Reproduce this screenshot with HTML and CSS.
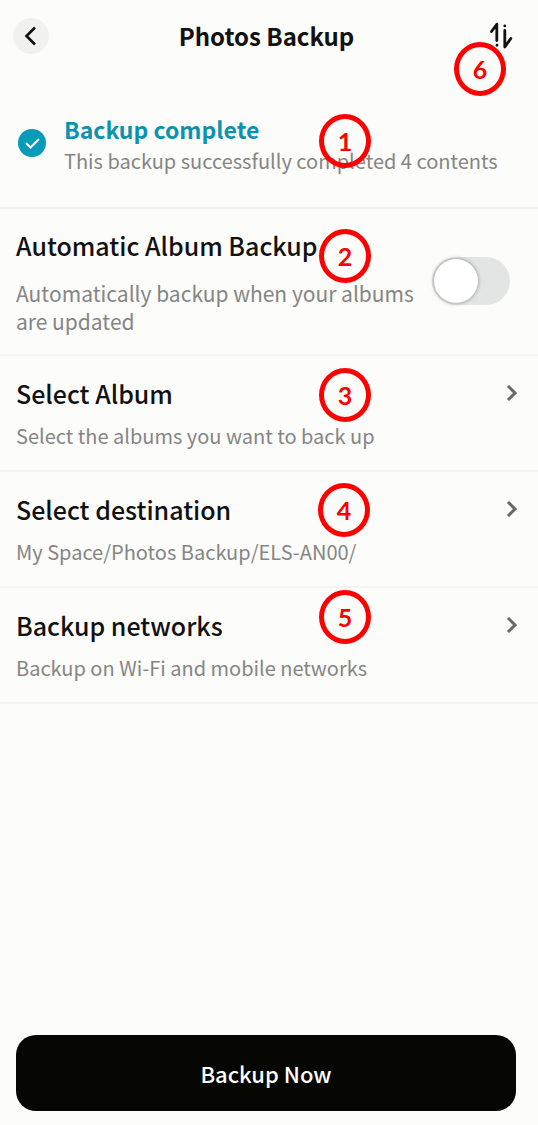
FILE: index.html
```html
<!DOCTYPE html>
<html lang="en">
<head>
<meta charset="utf-8">
<meta name="viewport" content="width=device-width, initial-scale=1">
<title>Photos Backup</title>
<link rel="stylesheet" href="styles.css">
</head>
<body>
<div class="screen">
  <header class="topbar">
    <button class="back" type="button" aria-label="Back">
      <svg width="36" height="36" viewBox="0 0 36 36" fill="none" stroke="#111" stroke-width="2.6"><path d="M22 9.500 13.500 18 22 26.500"/></svg>
    </button>
    <h1 class="title">Photos Backup</h1>
    <button class="transfer" type="button" aria-label="Transfer list">
      <svg width="24" height="28" viewBox="0 0 24 28" fill="none" stroke="#111" stroke-width="2.8" stroke-linecap="round" stroke-linejoin="round"><path d="M1.500 9.500 6.800 2.200V18.500M7 23.200V23.300M14.800 3.800V3.900M14.800 8.500V25L20.800 16.500"/></svg>
    </button>
    <span class="badge badge-transfer">6</span>
  </header>

  <section class="status">
    <svg class="status-icon" width="28" height="28" viewBox="0 0 28 28" fill="none"><circle cx="14" cy="14" r="14" fill="#069bb8"/><path d="M8 14 12.500 18.500 21 10" stroke="#fff" stroke-width="2"/></svg>
    <div class="status-text">
      <h2 class="status-title">Backup complete</h2>
      <p class="note">This backup successfully completed 4 contents</p>
    </div>
    <span class="badge badge-status">1</span>
  </section>

  <main class="settings">
    <div class="row row-auto">
      <label class="row-text" for="auto">
        <span class="row-title">Automatic Album Backup</span>
        <span class="note note-wide">Automatically backup when your albums are updated</span>
      </label>
      <input class="switch" id="auto" type="checkbox" role="switch">
      <span class="badge badge-auto">2</span>
    </div>
    <a class="row" href="#album">
      <span class="row-text">
        <span class="row-title">Select Album</span>
        <span class="note">Select the albums you want to back up</span>
      </span>
      <svg class="chevron" width="12" height="18" viewBox="0 0 12 18" fill="none" stroke="#686868" stroke-width="3"><path d="M2 2 9 9 2 16"/></svg>
      <span class="badge badge-album">3</span>
    </a>
    <a class="row" href="#destination">
      <span class="row-text">
        <span class="row-title">Select destination</span>
        <span class="note">My Space/Photos Backup/ELS-AN00/</span>
      </span>
      <svg class="chevron" width="12" height="18" viewBox="0 0 12 18" fill="none" stroke="#686868" stroke-width="3"><path d="M2 2 9 9 2 16"/></svg>
      <span class="badge badge-destination">4</span>
    </a>
    <a class="row" href="#networks">
      <span class="row-text">
        <span class="row-title">Backup networks</span>
        <span class="note">Backup on Wi-Fi and mobile networks</span>
      </span>
      <svg class="chevron" width="12" height="18" viewBox="0 0 12 18" fill="none" stroke="#686868" stroke-width="3"><path d="M2 2 9 9 2 16"/></svg>
      <span class="badge badge-networks">5</span>
    </a>
  </main>

  <footer class="actions">
    <button class="primary" type="button">Backup Now</button>
  </footer>
</div>
</body>
</html>
```
FILE: styles.css
```css
* { box-sizing: border-box; }

body {
  margin: 0;
  background: #fcfcfa;
  color: #111;
  font-family: "Noto Sans CJK SC", "Noto Sans", sans-serif;
}

h1, h2, p { margin: 0; }

button {
  border: 0;
  padding: 0;
  font-family: inherit;
  cursor: pointer;
}

.screen {
  min-height: 100vh;
  display: flex;
  flex-direction: column;
}

.topbar {
  position: relative;
  display: grid;
  grid-template-columns: 36px 1fr 36px;
  align-items: center;
  height: 72px;
  padding: 0 18px 0 13px;
}

.back {
  width: 36px;
  height: 36px;
  border-radius: 50%;
  background: #f1f1f0;
}

.back svg, .transfer svg { display: block; }

.title {
  font-size: 24px;
  line-height: 36px;
  font-weight: 700;
  text-align: center;
}

.transfer {
  justify-self: center;
  background: none;
}

.status {
  position: relative;
  display: flex;
  align-items: center;
  gap: 18px;
  padding: 39px 18px 32px;
  border-bottom: 2px solid #f4f4f3;
}

.status-icon { flex: none; }

.status-title {
  color: #0b93ae;
  font-size: 23px;
  line-height: 36px;
  font-weight: 700;
}

.note {
  color: #858585;
  font-size: 20px;
  line-height: 28px;
}

.row {
  position: relative;
  display: flex;
  justify-content: space-between;
  padding: 19px 20px 20px 16px;
  border-bottom: 2px solid #f4f4f3;
  color: inherit;
  text-decoration: none;
}

.row-text {
  display: flex;
  flex-direction: column;
  gap: 11px;
}

.row-title {
  font-size: 25px;
  line-height: 36px;
  font-weight: 500;
}

.row-auto {
  align-items: center;
  gap: 12px;
  padding: 18px 28px 19px 16px;
}

.row-auto .row-text { gap: 16px; }

.note-wide { font-size: 21px; }

.chevron {
  flex: none;
  margin-top: 9px;
}

.switch {
  appearance: none;
  flex: none;
  display: flex;
  align-items: center;
  width: 78px;
  height: 48px;
  margin: 0;
  padding: 2px;
  border-radius: 24px;
  background: #e3e5e5;
  cursor: pointer;
}

.switch::before {
  content: "";
  width: 44px;
  height: 44px;
  border-radius: 50%;
  background: #fff;
  box-shadow: 0 0 4px rgba(0, 0, 0, 0.4);
}

.switch:checked { background: #069bb8; }

.switch:checked::before { margin-left: auto; }

.actions {
  margin-top: auto;
  padding: 16px 22px 14px 16px;
}

.primary {
  width: 100%;
  height: 76px;
  border-radius: 20px;
  background: #060703;
  color: #fff;
  font-size: 22px;
  font-weight: 500;
}

.badge {
  position: absolute;
  left: 319px;
  display: flex;
  align-items: center;
  justify-content: center;
  width: 52px;
  height: 54px;
  border: 5px solid #fe0000;
  border-radius: 50%;
  color: #fe0000;
  font-family: Lato, "Open Sans", sans-serif;
  font-size: 25px;
  font-weight: 700;
  pointer-events: none;
}

.badge-transfer { top: 42px; left: auto; right: 32px; }
.badge-status { top: 42px; }
.badge-auto { top: 20px; }
.badge-album { top: 12px; }
.badge-destination { top: 11px; left: 318px; }
.badge-networks { top: 2px; }
```
